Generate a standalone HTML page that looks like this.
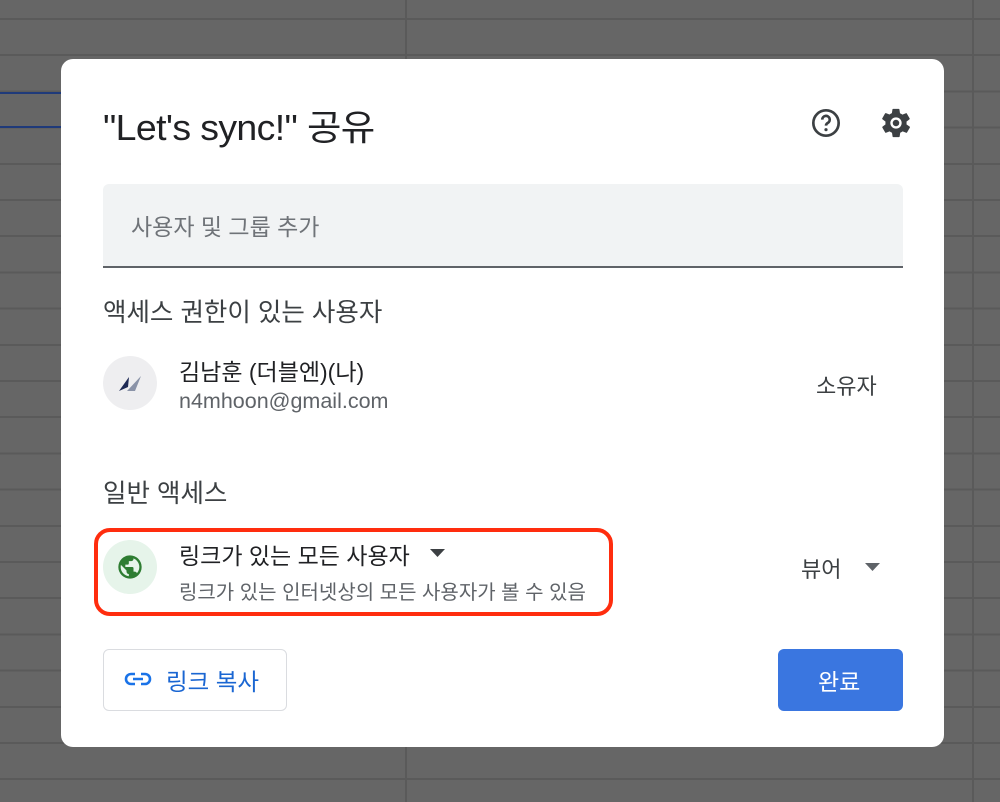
<!DOCTYPE html>
<html><head><meta charset="utf-8"><style>
html,body{margin:0;padding:0}
body{width:1000px;height:802px;position:relative;overflow:hidden;background:#666;
background-image:linear-gradient(to right,transparent 405px,#5a5a5a 405px,#5a5a5a 407px,transparent 407px,transparent 972px,#5a5a5a 972px,#5a5a5a 974px,transparent 974px),
repeating-linear-gradient(to bottom,transparent 0,transparent 18px,#5a5a5a 18px,#5a5a5a 20px,transparent 20px,transparent 36.2px);
font-family:"Liberation Sans","Noto Sans CJK KR",sans-serif;color:#202124}
.bl{position:absolute;left:0;width:62px;height:2px;background:#1f3a7a}
.dlg{position:absolute;left:61px;top:59px;width:883px;height:688px;background:#fff;border-radius:12px}
.a{position:absolute;white-space:nowrap}
</style></head><body>
<div class="bl" style="top:92px"></div><div class="bl" style="top:126px"></div>
<div class="dlg">
<div class="a" style="left:42px;top:40px;font-size:36px;letter-spacing:-0.6px;transform:scaleX(1.04);transform-origin:left">"Let's sync!" 공유</div>
<svg class="a" style="left:749px;top:48px" width="32" height="32" viewBox="0 0 24 24"><circle cx="12" cy="12" r="9.5" fill="none" stroke="#3c4043" stroke-width="2"/><path d="M9.2 9.5a2.8 2.8 0 1 1 4.2 2.4c-.9.5-1.4 1.1-1.4 2.1" fill="none" stroke="#3c4043" stroke-width="2"/><circle cx="12" cy="17" r="1.2" fill="#3c4043"/></svg>
<svg class="a" style="left:818px;top:47px" width="34" height="34" viewBox="0 0 24 24"><path fill="#3c4043" d="M19.4 13c.04-.3.06-.6.06-1s-.02-.7-.06-1l2.1-1.6c.2-.15.24-.42.12-.64l-2-3.46c-.12-.22-.4-.3-.6-.22l-2.5 1c-.5-.4-1.1-.7-1.700-1l-.4-2.6A.5.5 0 0 0 14 2h-4a.5.5 0 0 0-.5.42l-.4 2.6c-.6.26-1.2.6-1.7 1l-2.5-1c-.22-.08-.48 0-.6.22l-2 3.46c-.13.22-.08.5.12.64L4.6 11c-.04.3-.06.66-.06 1s.02.7.06 1l-2.1 1.6c-.2.15-.24.42-.12.64l2 3.460c.12.22.4.3.6.22l2.5-1c.5.4 1.1.7 1.7 1l.4 2.6c.04.24.25.42.5.42h4c.25 0 .46-.18.5-.42l.4-2.6c.6-.26 1.2-.6 1.7-1l2.5 1c.22.08.48 0 .6-.22l2-3.46c.12-.22.07-.5-.12-.64zM12 16a4 4 0 1 1 0-8 4 4 0 0 1 0 8z"/><circle cx="12" cy="12" r="2.3" fill="#3c4043"/></svg>
<div class="a" style="left:42px;top:125px;width:800px;height:82px;background:#f1f3f4;border-radius:6px 6px 0 0;border-bottom:2px solid #5f6368"></div>
<div class="a" style="left:70px;top:149px;font-size:23px;color:#6f7378">사용자 및 그룹 추가</div>
<div class="a" style="left:42px;top:233px;font-size:25.5px;color:#3c4043">액세스 권한이 있는 사용자</div>
<div class="a" style="left:42px;top:297px;width:54px;height:54px;border-radius:50%;background:#eeeef0"></div>
<svg class="a" style="left:54px;top:310px" width="30" height="28" viewBox="0 0 30 28"><path d="M4 22 L14 8 L13 18 Z" fill="#1e2a55"/><path d="M12 22 L26 7 L20 22 Z" fill="#8a93a8"/></svg>
<div class="a" style="left:118px;top:294px;font-size:23px;color:#202124">김남훈 (더블엔)(나)</div>
<div class="a" style="left:118px;top:330px;font-size:21.5px;color:#5f6368">n4mhoon@gmail.com</div>
<div class="a" style="left:755px;top:310px;font-size:22px;color:#3c4043">소유자</div>
<div class="a" style="left:42px;top:414px;font-size:25.5px;color:#3c4043">일반 액세스</div>
<div class="a" style="left:33px;top:469px;width:511px;height:80px;border:4px solid #ff2d0e;border-radius:16px"></div>
<div class="a" style="left:42px;top:481px;width:54px;height:54px;border-radius:50%;background:#e6f4ea"></div>
<svg class="a" style="left:55px;top:494px" width="28" height="28" viewBox="0 0 24 24"><path fill="#2e7d32" d="M12 2a10 10 0 1 0 0 20 10 10 0 0 0 0-20zm-1 17.9A8 8 0 0 1 4 12c0-.6.1-1.2.2-1.8L9 15v1a2 2 0 0 0 2 2zm6.9-2.5A2 2 0 0 0 16 16h-1v-3a1 1 0 0 0-1-1H8v-2h2a1 1 0 0 0 1-1V7h2a2 2 0 0 0 2-2v-.4a8 8 0 0 1 2.9 12.8z"/></svg>
<div class="a" style="left:118px;top:478px;font-size:23px;color:#202124">링크가 있는 모든 사용자</div>
<svg class="a" style="left:368px;top:488px" width="18" height="12"><path d="M1 2h15l-7.5 8z" fill="#3c4043"/></svg>
<div class="a" style="left:118px;top:517px;font-size:20px;color:#5f6368">링크가 있는 인터넷상의 모든 사용자가 볼 수 있음</div>
<div class="a" style="left:740px;top:493px;font-size:22px;color:#3c4043">뷰어</div>
<svg class="a" style="left:803px;top:502px" width="18" height="12"><path d="M1 2h15l-7.5 8z" fill="#5f6368"/></svg>
<div class="a" style="left:42px;top:590px;width:182px;height:60px;border:1px solid #dadce0;border-radius:6px"></div>
<svg class="a" style="left:63px;top:610px" width="28" height="20" viewBox="0 0 28 20"><path d="M11 5H7a5 5 0 0 0 0 10h4M17 5h4a5 5 0 0 1 0 10h-4M9 10h10" fill="none" stroke="#1a73e8" stroke-width="2.6"/></svg>
<div class="a" style="left:105px;top:604px;font-size:23.5px;color:#1a66d2">링크 복사</div>
<div class="a" style="left:717px;top:590px;width:125px;height:62px;background:#3a76e0;border-radius:6px"></div>
<div class="a" style="left:757px;top:604px;font-size:23px;color:#fff">완료</div>
</div>
</body></html>
